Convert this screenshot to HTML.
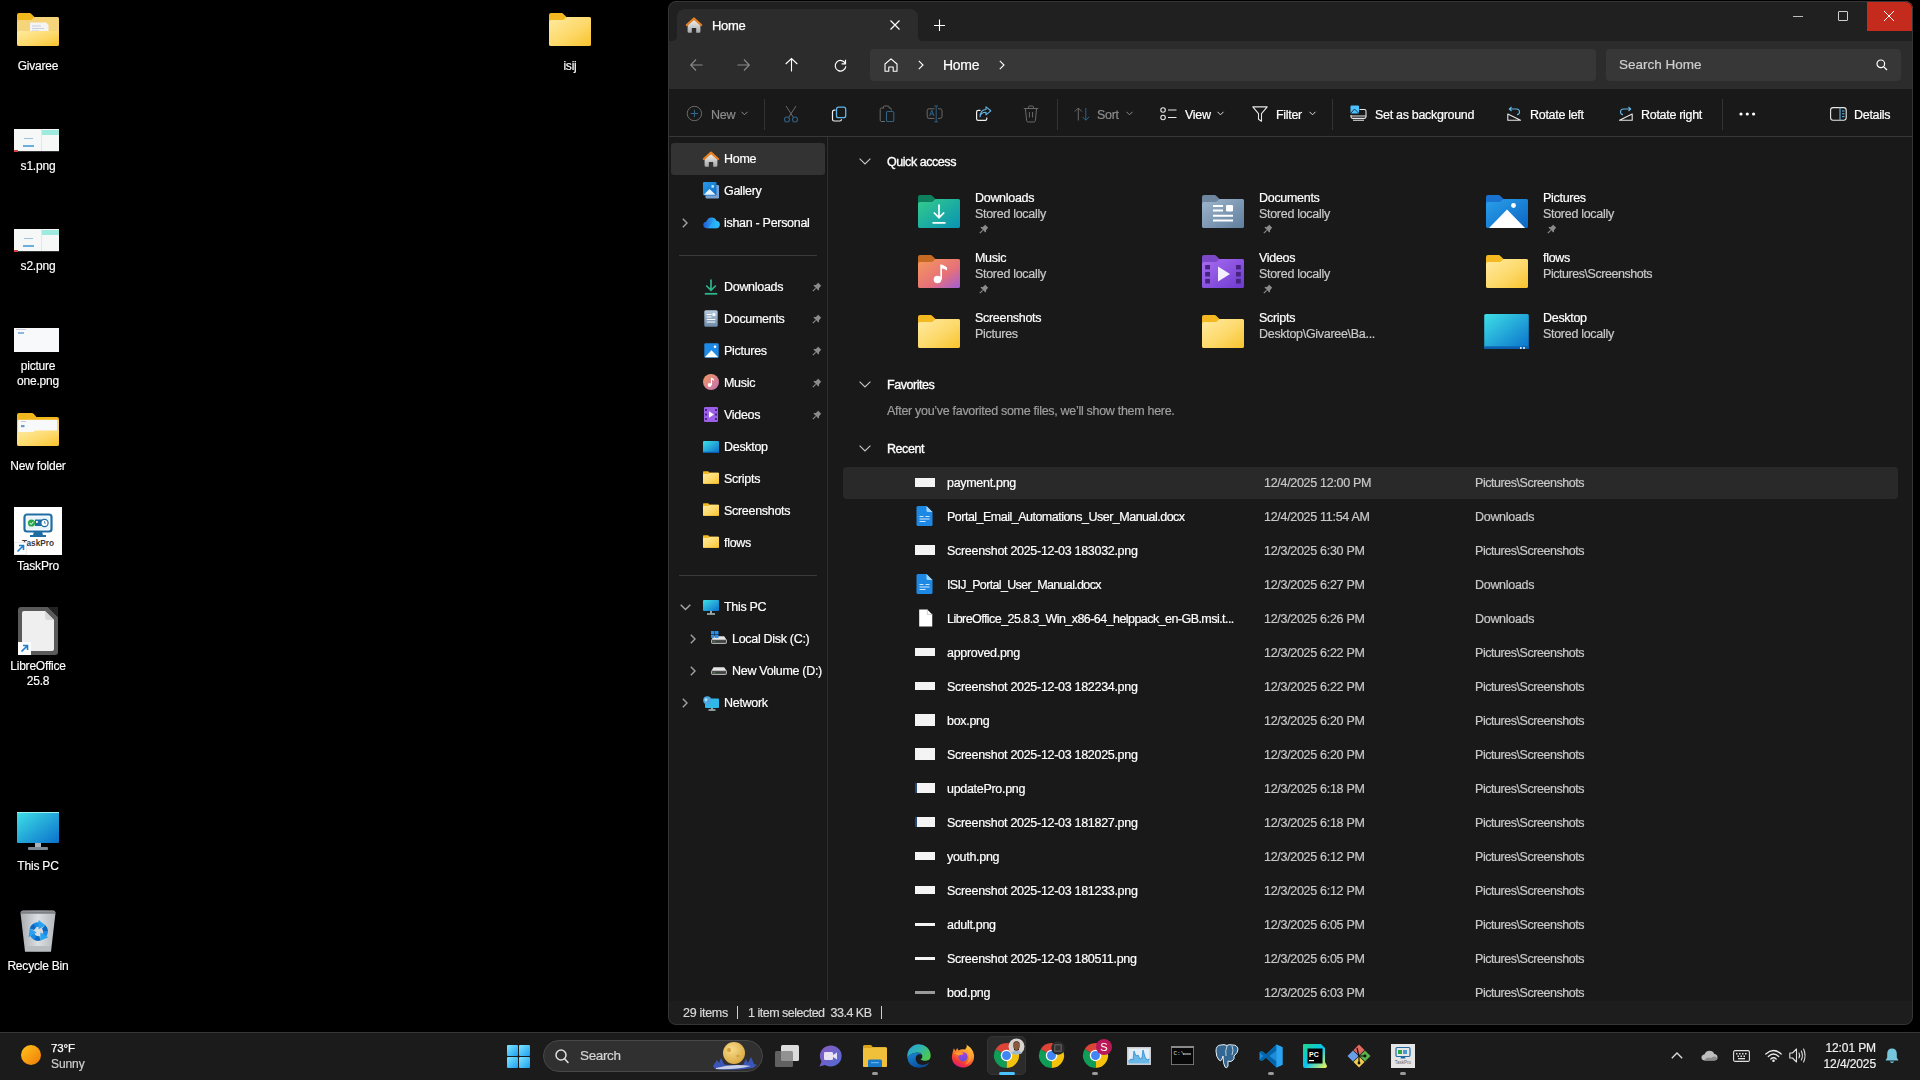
<!DOCTYPE html>
<html><head><meta charset="utf-8">
<style>
*{margin:0;padding:0;box-sizing:border-box}
html,body{width:1920px;height:1080px;overflow:hidden;background:#000;font-family:"Liberation Sans",sans-serif;color:#fff}
.a{position:absolute}
.t{position:absolute;white-space:nowrap;font-size:12.5px;letter-spacing:-0.3px;line-height:16px;color:#fff;will-change:transform;-webkit-text-stroke-width:0.2px}
.g{color:#c8c8c8}
svg{position:absolute;overflow:visible}
#win{position:absolute;left:0;top:0;width:1920px;height:1080px;clip-path:inset(1px 7px 55px 668px round 8px)}
.dl{position:absolute;text-align:center;font-size:12px;letter-spacing:-0.2px;line-height:16px;color:#fff;text-shadow:0 1px 2px #000;will-change:transform;-webkit-text-stroke-width:0.15px}
</style></head><body>
<svg width="0" height="0" style="position:absolute;left:0;top:0">
<defs>
  <linearGradient id="gFold" x1="0" y1="0" x2="1" y2="1"><stop offset="0" stop-color="#ffeaa0"/><stop offset="0.55" stop-color="#fdd96a"/><stop offset="1" stop-color="#f8c32c"/></linearGradient>
  <linearGradient id="gDl" x1="0" y1="0" x2="1" y2="1"><stop offset="0" stop-color="#34cc8c"/><stop offset="1" stop-color="#0892b4"/></linearGradient>
  <linearGradient id="gDoc" x1="0" y1="0" x2="1" y2="1"><stop offset="0" stop-color="#9fb6cc"/><stop offset="1" stop-color="#5f7e9e"/></linearGradient>
  <linearGradient id="gPic" x1="0" y1="0" x2="1" y2="1"><stop offset="0" stop-color="#2aa0ea"/><stop offset="1" stop-color="#0b65c2"/></linearGradient>
  <linearGradient id="gMus" x1="0" y1="0" x2="1" y2="1"><stop offset="0" stop-color="#f59a5a"/><stop offset="0.6" stop-color="#e6707a"/><stop offset="1" stop-color="#9e5fd8"/></linearGradient>
  <linearGradient id="gVid" x1="0" y1="0" x2="1" y2="1"><stop offset="0" stop-color="#a86cf0"/><stop offset="1" stop-color="#6d3ad0"/></linearGradient>
  <linearGradient id="gDesk" x1="0" y1="0" x2="1" y2="1"><stop offset="0" stop-color="#3ee0e6"/><stop offset="1" stop-color="#0a70cc"/></linearGradient>
  <symbol id="fold" viewBox="0 0 42 33"><path d="M0 2 Q0 0 2 0 H12.5 Q13.6 0 14.4 0.9 L17.5 4 H40 Q42 4 42 6 V31 Q42 33 40 33 H2 Q0 33 0 31 Z" fill="#f4b820"/><path d="M0 9 Q0 7 2 7 H13.5 Q14.5 7 15.2 6.2 L16.8 4.6 Q17.4 4 18.4 4 H40 Q42 4 42 6 V31 Q42 33 40 33 H2 Q0 33 0 31 Z" fill="url(#gFold)"/></symbol>
  <symbol id="foldDl" viewBox="0 0 42 33"><path d="M0 2 Q0 0 2 0 H12.5 Q13.6 0 14.4 0.9 L17.5 4 H40 Q42 4 42 6 V31 Q42 33 40 33 H2 Q0 33 0 31 Z" fill="#0e7f5c"/><path d="M0 9 Q0 7 2 7 H13.5 Q14.5 7 15.2 6.2 L16.8 4.6 Q17.4 4 18.4 4 H40 Q42 4 42 6 V31 Q42 33 40 33 H2 Q0 33 0 31 Z" fill="url(#gDl)"/><path d="M21 9.5 V22.5 M15.8 17.5 L21 22.7 L26.2 17.5" fill="none" stroke="#fff" stroke-width="1.7"/><path d="M14.5 27.8 H27.5" stroke="#fff" stroke-width="1.7"/></symbol>
  <symbol id="foldDoc" viewBox="0 0 42 33"><path d="M0 2 Q0 0 2 0 H12.5 Q13.6 0 14.4 0.9 L17.5 4 H40 Q42 4 42 6 V31 Q42 33 40 33 H2 Q0 33 0 31 Z" fill="#6e879e"/><path d="M0 9 Q0 7 2 7 H13.5 Q14.5 7 15.2 6.2 L16.8 4.6 Q17.4 4 18.4 4 H40 Q42 4 42 6 V31 Q42 33 40 33 H2 Q0 33 0 31 Z" fill="url(#gDoc)"/><path d="M11 11 H21 M11 15.5 H21 M11 20.7 H31 M11 25.6 H31" stroke="#fff" stroke-width="2"/><rect x="24" y="10" width="7" height="6.5" rx="1.2" fill="#fff"/></symbol>
  <symbol id="foldPic" viewBox="0 0 42 33"><path d="M0 2 Q0 0 2 0 H12.5 Q13.6 0 14.4 0.9 L17.5 4 H40 Q42 4 42 6 V31 Q42 33 40 33 H2 Q0 33 0 31 Z" fill="#1a72d0"/><path d="M0 9 Q0 7 2 7 H13.5 Q14.5 7 15.2 6.2 L16.8 4.6 Q17.4 4 18.4 4 H40 Q42 4 42 6 V31 Q42 33 40 33 H2 Q0 33 0 31 Z" fill="url(#gPic)"/><path d="M3 33 L21 14.5 L39 33 Z" fill="#fff"/><circle cx="27.5" cy="10.5" r="2.4" fill="#fff"/></symbol>
  <symbol id="foldMus" viewBox="0 0 42 33"><path d="M0 2 Q0 0 2 0 H12.5 Q13.6 0 14.4 0.9 L17.5 4 H40 Q42 4 42 6 V31 Q42 33 40 33 H2 Q0 33 0 31 Z" fill="#c56a22"/><path d="M0 9 Q0 7 2 7 H13.5 Q14.5 7 15.2 6.2 L16.8 4.6 Q17.4 4 18.4 4 H40 Q42 4 42 6 V31 Q42 33 40 33 H2 Q0 33 0 31 Z" fill="url(#gMus)"/><circle cx="19.5" cy="24.5" r="3.8" fill="#fff"/><path d="M22.3 24.5 V9.2 Q25.5 9.8 29 12.5 V15.5 Q26 13.6 24 13.5 V24.5 Z" fill="#fff"/></symbol>
  <symbol id="foldVid" viewBox="0 0 42 33"><path d="M0 2 Q0 0 2 0 H12.5 Q13.6 0 14.4 0.9 L17.5 4 H40 Q42 4 42 6 V31 Q42 33 40 33 H2 Q0 33 0 31 Z" fill="#7b48c8"/><path d="M0 9 Q0 7 2 7 H13.5 Q14.5 7 15.2 6.2 L16.8 4.6 Q17.4 4 18.4 4 H40 Q42 4 42 6 V31 Q42 33 40 33 H2 Q0 33 0 31 Z" fill="url(#gVid)"/><path d="M16 11.5 V26.5 L28 19 Z" fill="#f4f0ff"/><g fill="#45237e"><rect x="3.2" y="10" width="4.8" height="4.4"/><rect x="3.2" y="16.9" width="4.8" height="4.6"/><rect x="3.2" y="23.9" width="4.8" height="4.6"/><rect x="34" y="10" width="4.8" height="4.4"/><rect x="34" y="16.9" width="4.8" height="4.6"/><rect x="34" y="23.9" width="4.8" height="4.6"/></g></symbol>
  <symbol id="deskIc" viewBox="0 0 42 33"><rect x="0" y="0" width="42" height="33" rx="1.5" fill="url(#gDesk)"/><rect x="0" y="30.5" width="42" height="2.5" fill="#0b5fae"/><circle cx="34.5" cy="32" r="0.9" fill="#fff"/><circle cx="37.5" cy="32" r="0.9" fill="#fff"/></symbol>
  <symbol id="pin" viewBox="0 0 10 10"><path d="M6 0.6 L9.4 4 L8.3 4.6 L6.8 6.7 L7.2 7.8 L6.4 8.5 L1.5 3.6 L2.2 2.8 L3.3 3.2 L5.4 1.7 Z" fill="#8c8c8c"/><path d="M3.7 6.3 L0.8 9.2" stroke="#8c8c8c" stroke-width="1.1"/></symbol>
  <symbol id="chevR" viewBox="0 0 6 10"><path d="M0.8 0.8 L5 5 L0.8 9.2" fill="none" stroke="#a0a0a0" stroke-width="1.4"/></symbol>
  <symbol id="chevD" viewBox="0 0 12 7"><path d="M0.6 0.6 L6 6 L11.4 0.6" fill="none" stroke="#c8c8c8" stroke-width="1.1"/></symbol>
  <symbol id="docx" viewBox="0 0 16 20"><path d="M1.5 0 H10 L16 6 V18.5 Q16 20 14.5 20 H1.5 Q0 20 0 18.5 V1.5 Q0 0 1.5 0 Z" fill="#1e88e5"/><path d="M10 0 L16 6 H11.5 Q10 6 10 4.5 Z" fill="#9fd6ff"/><path d="M3 10.5 H7 M9 10.5 H13 M3 13 H13 M3 15.5 H9" stroke="#cfe8ff" stroke-width="1.1"/></symbol>
  <symbol id="file" viewBox="0 0 16 20"><path d="M1 0.5 H10 L15.5 6 V19.5 H1 Z" fill="#fff"/><path d="M10 0.5 V6 H15.5" fill="none" stroke="#bbb" stroke-width="0.8"/></symbol>
</defs>
</svg>

<!-- DESKTOP -->
<svg style="left:17px;top:13px" width="42" height="33" viewBox="0 0 42 33"><path d="M0 2 Q0 0 2 0 H12.5 Q13.6 0 14.4 0.9 L17.5 4 H40 Q42 4 42 6 V31 Q42 33 40 33 H2 Q0 33 0 31 Z" fill="#f2b71d"/><path d="M0 9 Q0 7 2 7 H13.5 Q14.5 7 15.2 6.2 L16.8 4.6 Q17.4 4 18.4 4 H40 Q42 4 42 6 V20 H0 Z" fill="#f6d57a"/><path d="M13 9.5 H29 L31.5 12 V22 H13 Z" fill="#f4f4f4"/><path d="M15 13 H24 M15 15.5 H27 M15 18 H22" stroke="#c8d0dc" stroke-width="1"/><path d="M0 20 Q0 18 2 18 H40 Q42 18 42 20 V31 Q42 33 40 33 H2 Q0 33 0 31 Z" fill="url(#gFold)"/></svg>
<div class="dl" style="left:-2px;top:58px;width:80px;line-height:16px">Givaree</div>
<svg style="left:549px;top:13px" width="42" height="33"><use href="#fold" width="42" height="33"/></svg>
<div class="dl" style="left:530px;top:58px;width:80px;line-height:16px">isij</div>
<div class="a" style="left:14px;top:129px;width:45px;height:23px;background:#f6f8f8;overflow:hidden">
<div class="a" style="left:28px;top:1px;width:17px;height:5px;background:#9eeadc"></div>
<div class="a" style="left:27px;top:0;width:1px;height:23px;background:#e2e6e8"></div>
<div class="a" style="left:10px;top:9px;width:9px;height:1px;background:#9ec0e0"></div>
<div class="a" style="left:9px;top:16px;width:11px;height:2px;background:#6aaee0"></div>
<div class="a" style="left:0;top:22px;width:45px;height:1px;background:#333"></div>
<div class="a" style="left:0;top:21px;width:4px;height:2px;background:#e04040"></div>
</div>
<div class="a" style="left:14px;top:229px;width:45px;height:23px;background:#f6f8f8;overflow:hidden">
<div class="a" style="left:28px;top:1px;width:17px;height:5px;background:#9eeadc"></div>
<div class="a" style="left:27px;top:0;width:1px;height:23px;background:#e2e6e8"></div>
<div class="a" style="left:10px;top:9px;width:9px;height:1px;background:#9ec0e0"></div>
<div class="a" style="left:9px;top:16px;width:11px;height:2px;background:#6aaee0"></div>
<div class="a" style="left:0;top:22px;width:45px;height:1px;background:#333"></div>
<div class="a" style="left:0;top:21px;width:4px;height:2px;background:#e04040"></div>
</div>
<div class="dl" style="left:-2px;top:158px;width:80px;line-height:16px">s1.png</div>
<div class="dl" style="left:-2px;top:258px;width:80px;line-height:16px">s2.png</div>
<div class="a" style="left:14px;top:328px;width:45px;height:24px;background:#f7f9fa"><div class="a" style="left:4px;top:4px;width:6px;height:2px;background:#8ab8e0"></div><div class="a" style="left:2px;top:1px;width:10px;height:1px;background:#ccd"></div></div>
<div class="dl" style="left:-2px;top:358px;width:80px;line-height:16px">picture</div>
<div class="dl" style="left:-2px;top:373px;width:80px;line-height:16px">one.png</div>
<svg style="left:17px;top:413px" width="42" height="33" viewBox="0 0 42 33"><path d="M0 2 Q0 0 2 0 H15 Q16 0 16.8 0.9 L19.5 4 H40 Q42 4 42 6 V31 Q42 33 40 33 H2 Q0 33 0 31 Z" fill="#f2b71d"/><path d="M0 9 Q0 7 2 7 H40 Q42 6.5 42 8 V20 H0 Z" fill="#f6d57a"/><rect x="1.2" y="6.8" width="38.8" height="12.5" fill="#f7f9fa"/><rect x="4" y="12" width="3.5" height="2.2" fill="#6a9ec0"/><rect x="4" y="8" width="5" height="0.8" fill="#bbb"/><path d="M0 21.5 Q0 19.3 2 19.3 H15 Q16 19.3 16.8 18.4 L17.2 18 Q17.6 17.4 18.6 17.4 H40 Q42 17.4 42 19.4 V31 Q42 33 40 33 H2 Q0 33 0 31 Z" fill="url(#gFold)"/></svg>
<div class="dl" style="left:-2px;top:458px;width:80px;line-height:16px">New folder</div>
<div class="a" style="left:14px;top:507px;width:48px;height:48px;background:#fff"></div>
<svg style="left:14px;top:507px" width="48" height="48" viewBox="0 0 48 48"><rect x="10.5" y="7.5" width="27" height="17" rx="2.5" fill="none" stroke="#1f6da3" stroke-width="2.2"/><rect x="12.5" y="9.5" width="23" height="13" fill="#eaf4fb"/><circle cx="17.5" cy="16" r="3.6" fill="#2aa84a"/><path d="M15.8 16 L17.2 17.4 L19.4 14.8" fill="none" stroke="#fff" stroke-width="1"/><rect x="21" y="12.5" width="8" height="6.5" fill="#1f6da3"/><rect x="22" y="14" width="1.8" height="1.8" fill="#fff"/><circle cx="30.5" cy="16" r="3.6" fill="#fff" stroke="#1f6da3" stroke-width="1.2"/><path d="M30.5 14 V16.2 H32" fill="none" stroke="#1f6da3" stroke-width="0.7"/><path d="M20 24.5 H28 L29 28 H19 Z" fill="#1f6da3"/><rect x="16" y="28" width="16" height="2" fill="#1f6da3"/><text x="8" y="38.6" textLength="32" lengthAdjust="spacingAndGlyphs" font-family="Liberation Sans" font-weight="bold" font-size="9.3" fill="#3a3a3a">TaskPro</text><rect x="0.5" y="35.5" width="12" height="12" fill="#fff" stroke="#ddd" stroke-width="0.6"/><path d="M3.5 44.5 L9.5 38.5 M5 38.5 H9.5 V43" fill="none" stroke="#1a7fd0" stroke-width="1.6"/></svg>
<div class="dl" style="left:-2px;top:558px;width:80px;line-height:16px">TaskPro</div>
<svg style="left:18px;top:607px" width="40" height="48" viewBox="0 0 40 48"><path d="M3 0 H30 L40 10 V45 Q40 48 37 48 H3 Q0 48 0 45 V3 Q0 0 3 0 Z" fill="#5a5a5a"/><path d="M6 4 H27 L36 13 V42 Q36 44 34 44 H6 Q4 44 4 42 V6 Q4 4 6 4 Z" fill="#efefef"/><path d="M27 4 L36 13 H30 Q27 13 27 10 Z" fill="#d8d8d8"/><path d="M30 0 H40 V10 Z" fill="#222"/><rect x="0" y="35" width="13" height="13" fill="#fff"/><path d="M3.5 44.5 L9.5 38.5 M5 38.5 H9.5 V43" fill="none" stroke="#1a7fd0" stroke-width="1.6"/></svg>
<div class="dl" style="left:-2px;top:658px;width:80px;line-height:16px">LibreOffice</div>
<div class="dl" style="left:-2px;top:673px;width:80px;line-height:16px">25.8</div>
<svg style="left:17px;top:812px" width="42" height="39" viewBox="0 0 42 39"><rect x="0" y="0" width="42" height="31" rx="1" fill="url(#gDesk)"/><rect x="0" y="0" width="42" height="1" fill="#9ee"/><rect x="18" y="31" width="6" height="5" fill="#a9b4bc"/><rect x="11" y="35" width="20" height="3" rx="1" fill="#7d8a94"/></svg>
<div class="dl" style="left:-2px;top:858px;width:80px;line-height:16px">This PC</div>
<svg style="left:20px;top:910px" width="36" height="42" viewBox="0 0 36 42"><defs><linearGradient id="gBin" x1="0" y1="0" x2="1" y2="0"><stop offset="0" stop-color="#a8acb0"/><stop offset="0.5" stop-color="#dcdfe2"/><stop offset="1" stop-color="#b4b8bc"/></linearGradient></defs><path d="M0.5 3 Q0.5 0.5 3 0.5 H33 Q35.5 0.5 35.5 3 L31 41.5 H5 Z" fill="url(#gBin)"/><path d="M1 2.5 H35" stroke="#7d8185" stroke-width="2.5"/><rect x="5" y="36" width="26" height="5.5" fill="#b8bcbf"/><g transform="translate(18.5 21.5)"><g id="rarm"><path d="M-6.06 -3.5 A7 7 0 0 1 1.2 -6.9" stroke="#1a8ae6" stroke-width="4.6" fill="none"/><path d="M0 -11.5 L7.2 -6 L0 -2.2 Z" fill="#29a3f0"/><path d="M-6.6 -2.2 A7 7 0 0 1 -3.8 -5.8" stroke="#0c68c0" stroke-width="4.6" fill="none"/></g><use href="#rarm" transform="rotate(120)"/><use href="#rarm" transform="rotate(240)"/></g></svg>
<div class="dl" style="left:-2px;top:958px;width:80px;line-height:16px">Recycle Bin</div>

<!-- WINDOW -->
<div id="win">
  <div class="a" style="left:668px;top:0;width:1245px;height:41px;background:#202020"></div>
  <div class="a" style="left:668px;top:41px;width:1245px;height:48px;background:#2c2c2c"></div>
  <div class="a" style="left:668px;top:89px;width:1245px;height:912px;background:#191919"></div>
  <div class="a" style="left:668px;top:136px;width:1245px;height:1px;background:#383838"></div>
  <div class="a" style="left:826px;top:137px;width:1px;height:864px;background:#151515"></div><div class="a" style="left:827px;top:137px;width:1px;height:864px;background:#303030"></div>
  <div class="a" style="left:668px;top:1001px;width:1245px;height:24px;background:#1d1d1d"></div>
  <!-- TAB -->
  <div class="a" style="left:677px;top:9px;width:241px;height:32px;background:#2c2c2c;border-radius:8px 8px 0 0"></div>
  <div class="a" style="left:673px;top:37px;width:4px;height:4px;background:radial-gradient(circle at 0 0,#202020 3.5px,#2c2c2c 4px)"></div>
  <div class="a" style="left:918px;top:37px;width:4px;height:4px;background:radial-gradient(circle at 100% 0,#202020 3.5px,#2c2c2c 4px)"></div>
  <svg style="left:686px;top:17px" width="16" height="16" viewBox="0 0 16 16">
    <defs><linearGradient id="hg" x1="0" y1="0" x2="0" y2="1"><stop offset="0" stop-color="#f0f0f0"/><stop offset="1" stop-color="#a8a8a8"/></linearGradient></defs>
    <path d="M1.6 8 L8 2.8 L14.4 8 V14.6 Q14.4 15.8 13.2 15.8 H10.2 V11 H5.8 V15.8 H2.8 Q1.6 15.8 1.6 14.6 Z" fill="url(#hg)"/>
    <path d="M0.8 8 L8 1.5 L15.2 8" fill="none" stroke="#e8801e" stroke-width="2.2" stroke-linejoin="round" stroke-linecap="round"/>
  </svg>
  <div class="t" style="left:712px;top:18px;font-size:13px;letter-spacing:-0.3px;-webkit-text-stroke:0.25px #fff">Home</div>
  <svg style="left:890px;top:20px" width="10" height="10" viewBox="0 0 10 10"><path d="M0.5 0.5 L9.5 9.5 M9.5 0.5 L0.5 9.5" stroke="#fff" stroke-width="1.2"/></svg>
  <svg style="left:933px;top:19px" width="13" height="13" viewBox="0 0 13 13"><path d="M6.5 0.5 V12 M1 6.5 H12" stroke="#fff" stroke-width="1.1"/></svg>
  <!-- window controls -->
  <div class="a" style="left:1867px;top:1px;width:46px;height:30px;background:#c42b1c"></div>
  <svg style="left:1884px;top:11px" width="10" height="10" viewBox="0 0 10 10"><path d="M0 0 L10 10 M10 0 L0 10" stroke="#fff" stroke-width="1"/></svg>
  <div class="a" style="left:1838px;top:11px;width:10px;height:10px;border:1px solid #d0d0d0;border-radius:1px"></div>
  <div class="a" style="left:1793px;top:16px;width:10px;height:1px;background:#bdbdbd"></div>

  <!-- ADDRESS ROW -->
  <svg style="left:690px;top:59px" width="13" height="12" viewBox="0 0 13 12"><path d="M6 0.5 L0.7 6 L6 11.5 M0.7 6 H12.5" fill="none" stroke="#8a8a8a" stroke-width="1.1"/></svg>
  <svg style="left:737px;top:59px" width="13" height="12" viewBox="0 0 13 12"><path d="M7 0.5 L12.3 6 L7 11.5 M12.3 6 H0.5" fill="none" stroke="#8a8a8a" stroke-width="1.1"/></svg>
  <svg style="left:785px;top:58px" width="13" height="14" viewBox="0 0 13 14"><path d="M0.7 6 L6.5 0.6 L12.3 6 M6.5 0.6 V13.5" fill="none" stroke="#fff" stroke-width="1.1"/></svg>
  <svg style="left:834px;top:59px" width="13" height="13" viewBox="0 0 13 13"><path d="M11.3 4.5 A5.3 5.3 0 1 0 11.8 7.2" fill="none" stroke="#fff" stroke-width="1.2"/><path d="M11.5 0.8 V4.8 H7.6" fill="none" stroke="#fff" stroke-width="1.2"/></svg>
  <div class="a" style="left:870px;top:49px;width:726px;height:32px;background:#373737;border-radius:4px"></div>
  <svg style="left:883px;top:57px" width="16" height="16" viewBox="0 0 16 16"><path d="M2 7 L8 1.8 L14 7 V14.2 H10.2 V10 H5.8 V14.2 H2 Z" fill="none" stroke="#fff" stroke-width="1.1" stroke-linejoin="round"/></svg>
  <svg style="left:918px;top:60px" width="6" height="10" viewBox="0 0 6 10"><path d="M0.8 0.8 L5 5 L0.8 9.2" fill="none" stroke="#fff" stroke-width="1.1"/></svg>
  <div class="t" style="left:943px;top:57px;font-size:14px;letter-spacing:-0.3px">Home</div>
  <svg style="left:999px;top:60px" width="6" height="10" viewBox="0 0 6 10"><path d="M0.8 0.8 L5 5 L0.8 9.2" fill="none" stroke="#fff" stroke-width="1.1"/></svg>
  <div class="a" style="left:1606px;top:49px;width:295px;height:32px;background:#373737;border-radius:4px"></div>
  <div class="t" style="left:1619px;top:57px;font-size:13.5px;letter-spacing:0px;color:#cfcfcf">Search Home</div>
  <svg style="left:1876px;top:59px" width="12" height="12" viewBox="0 0 12 12"><circle cx="4.8" cy="4.8" r="3.8" fill="none" stroke="#fff" stroke-width="1.2"/><path d="M7.6 7.6 L11 11" stroke="#fff" stroke-width="1.3"/></svg>

  <!-- TOOLBAR -->
  <svg style="left:686px;top:106px" width="16" height="16" viewBox="0 0 16 16"><circle cx="8.4" cy="7.5" r="7.2" fill="none" stroke="#6a6a6a" stroke-width="1"/><path d="M8.4 3.8 V11.2 M4.7 7.5 H12.1" stroke="#2f6a90" stroke-width="1"/></svg>
  <div class="t" style="left:711px;top:107px;color:#8c8c8c">New</div>
  <svg style="left:741px;top:111px" width="7" height="5" viewBox="0 0 7 5"><path d="M0.5 0.8 L3.5 3.8 L6.5 0.8" fill="none" stroke="#8c8c8c" stroke-width="1"/></svg>
  <div class="a" style="left:764px;top:99px;width:1px;height:31px;background:#333"></div>
  <svg style="left:783px;top:105px" width="16" height="18" viewBox="0 0 16 18"><path d="M3 1 L10.5 12.5 M13 1 L5.5 12.5" stroke="#6a6a6a" stroke-width="1"/><circle cx="4" cy="14.5" r="2.5" fill="none" stroke="#2f6285" stroke-width="1.1"/><circle cx="12" cy="14.5" r="2.5" fill="none" stroke="#2f6285" stroke-width="1.1"/></svg>
  <svg style="left:831px;top:106px" width="17" height="17" viewBox="0 0 17 17"><path d="M4.5 4.2 H3.2 Q1.5 4.2 1.5 6 V13.2 Q1.5 15 3.2 15 H8.8 Q10.5 15 10.5 13.2" fill="none" stroke="#f0f0f0" stroke-width="1.2"/><rect x="5.5" y="1.2" width="9.2" height="10.5" rx="2" fill="none" stroke="#62b6e6" stroke-width="1.3"/></svg>
  <svg style="left:879px;top:105px" width="16" height="18" viewBox="0 0 16 18"><path d="M5 3 H2.5 Q1.2 3 1.2 4.3 V15.2 Q1.2 16.5 2.5 16.5 H6" fill="none" stroke="#6a6a6a" stroke-width="1"/><path d="M4.5 3 V1.8 Q4.5 1 5.3 1 H9.2 Q10 1 10 1.8 V3 H11 Q12.3 3 12.3 4.3 V5.5" fill="none" stroke="#6a6a6a" stroke-width="1"/><rect x="7.5" y="6.5" width="7.3" height="10" rx="1.3" fill="none" stroke="#2f6285" stroke-width="1.1"/></svg>
  <svg style="left:926px;top:105px" width="18" height="18" viewBox="0 0 18 18"><path d="M8.5 3.8 H3 Q1.2 3.8 1.2 5.6 V11.6 Q1.2 13.4 3 13.4 H8.5 M12 3.8 H14.2 Q16 3.8 16 5.6 V11.6 Q16 13.4 14.2 13.4 H12" fill="none" stroke="#6a6a6a" stroke-width="1"/><path d="M10.2 1 V16.8 M8.4 1 H12 M8.4 16.8 H12" stroke="#2f6285" stroke-width="1"/><path d="M3.5 11 L5.8 5.2 L8 11 M4.3 9 H7.3" fill="none" stroke="#2f6285" stroke-width="1"/></svg>
  <svg style="left:975px;top:106px" width="17" height="16" viewBox="0 0 17 16"><path d="M5.5 4.3 H3.2 Q1.6 4.3 1.6 5.9 V12.8 Q1.6 14.4 3.2 14.4 H10.2 Q11.8 14.4 11.8 12.8 V11.5" fill="none" stroke="#f0f0f0" stroke-width="1.2"/><path d="M5 10.8 Q5.8 6.2 11 6.2 V8.8 L15.8 4.8 L11 0.9 V3.5 Q5.4 3.8 5 10.8 Z" fill="none" stroke="#62b6e6" stroke-width="1.1" stroke-linejoin="round"/></svg>
  <svg style="left:1023px;top:105px" width="16" height="18" viewBox="0 0 16 18"><path d="M0.8 3.5 H15.2 M5.5 3.5 V2.2 Q5.5 1 6.7 1 H9.3 Q10.5 1 10.5 2.2 V3.5 M2.4 3.5 L3.6 15.5 Q3.8 17 5.3 17 H10.7 Q12.2 17 12.4 15.5 L13.6 3.5 M6.4 7 V12.5 M9.6 7 V12.5" fill="none" stroke="#6a6a6a" stroke-width="1"/></svg>
  <div class="a" style="left:1057px;top:99px;width:1px;height:31px;background:#333"></div>
  <svg style="left:1074px;top:107px" width="17" height="14" viewBox="0 0 17 14"><path d="M4.3 13.5 V1 M0.8 4.5 L4.3 1 L7.8 4.5" fill="none" stroke="#6a6a6a" stroke-width="1"/><path d="M11.8 1 V13.2 M8.3 9.7 L11.8 13.2 L15.3 9.7" fill="none" stroke="#2f6285" stroke-width="1"/></svg>
  <div class="t" style="left:1097px;top:107px;color:#8c8c8c">Sort</div>
  <svg style="left:1126px;top:111px" width="7" height="5" viewBox="0 0 7 5"><path d="M0.5 0.8 L3.5 3.8 L6.5 0.8" fill="none" stroke="#8c8c8c" stroke-width="1"/></svg>
  <svg style="left:1160px;top:107px" width="17" height="14" viewBox="0 0 17 14"><rect x="0.8" y="0.8" width="4.5" height="4.5" rx="2.2" fill="none" stroke="#e8e8e8" stroke-width="1.1"/><rect x="0.8" y="8.2" width="4.5" height="4.5" rx="2.2" fill="none" stroke="#e8e8e8" stroke-width="1.1"/><path d="M8 3 H16.5 M8 10.5 H16.5" stroke="#e8e8e8" stroke-width="1.1"/></svg>
  <div class="t" style="left:1185px;top:107px">View</div>
  <svg style="left:1217px;top:111px" width="7" height="5" viewBox="0 0 7 5"><path d="M0.5 0.8 L3.5 3.8 L6.5 0.8" fill="none" stroke="#ddd" stroke-width="1"/></svg>
  <svg style="left:1252px;top:106px" width="16" height="16" viewBox="0 0 16 16"><path d="M0.8 0.9 H15.2 L9.5 7.6 V15.2 L6.5 13.2 V7.6 Z" fill="none" stroke="#e8e8e8" stroke-width="1.1" stroke-linejoin="round"/></svg>
  <div class="t" style="left:1276px;top:107px">Filter</div>
  <svg style="left:1309px;top:111px" width="7" height="5" viewBox="0 0 7 5"><path d="M0.5 0.8 L3.5 3.8 L6.5 0.8" fill="none" stroke="#ddd" stroke-width="1"/></svg>
  <div class="a" style="left:1332px;top:99px;width:1px;height:31px;background:#333"></div>
  <svg style="left:1350px;top:105px" width="17" height="16" viewBox="0 0 17 16"><path d="M9.5 4.5 H14.4 Q16 4.5 16 6.1 V11.8 Q16 13.4 14.4 13.4 H2.6 Q1 13.4 1 11.8 V10 M1 11 H16 M3 15.2 H14" fill="none" stroke="#e8e8e8" stroke-width="1.1"/><rect x="0.5" y="0.5" width="8.5" height="8" rx="1" fill="#4cc2ff"/><path d="M1 8 L4.5 4 L8.5 8" fill="none" stroke="#1a3a50" stroke-width="1"/></svg>
  <div class="t" style="left:1375px;top:107px">Set as background</div>
  <svg style="left:1507px;top:106px" width="15" height="15" viewBox="0 0 15 15"><path d="M0.8 14.2 H13.5 L0.8 8 Z" fill="none" stroke="#e8e8e8" stroke-width="1.1" stroke-linejoin="round"/><path d="M4.5 1 L2.3 3 L4.5 5 M2.3 3 H9.5 Q12.5 3 12.5 6 Q12.5 8.5 10 8.6" fill="none" stroke="#62b6e6" stroke-width="1.1"/></svg>
  <div class="t" style="left:1530px;top:107px">Rotate left</div>
  <svg style="left:1618px;top:106px" width="15" height="15" viewBox="0 0 15 15"><path d="M14.2 14.2 H1.5 L14.2 8 Z" fill="none" stroke="#e8e8e8" stroke-width="1.1" stroke-linejoin="round"/><path d="M10.5 1 L12.7 3 L10.5 5 M12.7 3 H5.5 Q2.5 3 2.5 6 Q2.5 8.5 5 8.6" fill="none" stroke="#62b6e6" stroke-width="1.1"/></svg>
  <div class="t" style="left:1641px;top:107px">Rotate right</div>
  <div class="a" style="left:1722px;top:99px;width:1px;height:31px;background:#333"></div>
  <svg style="left:1739px;top:112px" width="17" height="4" viewBox="0 0 17 4"><circle cx="2" cy="2" r="1.6" fill="#fff"/><circle cx="8.3" cy="2" r="1.6" fill="#fff"/><circle cx="14.6" cy="2" r="1.6" fill="#fff"/></svg>
  <svg style="left:1830px;top:107px" width="17" height="14" viewBox="0 0 17 14"><rect x="0.6" y="0.6" width="15.6" height="12.6" rx="2.5" fill="none" stroke="#e8e8e8" stroke-width="1.1"/><path d="M10 0.6 V13.2" stroke="#62b6e6" stroke-width="1.1"/><path d="M12 4 H14.5 M12 6.8 H14.5 M12 9.6 H14.5" stroke="#62b6e6" stroke-width="1"/></svg>
  <div class="t" style="left:1854px;top:107px">Details</div>
<!-- NAV -->
<div class="a" style="left:671px;top:143px;width:154px;height:32px;background:#333333;border-radius:3px"></div>
<svg style="left:703px;top:151px" width="16" height="16" viewBox="0 0 16 16"><path d="M1.6 8 L8 2.8 L14.4 8 V14.6 Q14.4 15.8 13.2 15.8 H10.2 V11 H5.8 V15.8 H2.8 Q1.6 15.8 1.6 14.6 Z" fill="url(#hg)"/><path d="M0.9 8 L8 1.6 L15.1 8" fill="none" stroke="#e8801e" stroke-width="2.2" stroke-linejoin="round" stroke-linecap="round"/></svg>
<div class="t " style="left:724px;top:151px;">Home</div>
<svg style="left:703px;top:182px" width="16" height="17" viewBox="0 0 16 17"><defs><linearGradient id="gGal" x1="0" y1="0" x2="1" y2="1"><stop offset="0" stop-color="#2a9ae8"/><stop offset="1" stop-color="#0e6cc4"/></linearGradient></defs><rect x="2.5" y="3" width="13.5" height="13.5" rx="1.2" fill="#7aa2d0"/><rect x="0" y="0" width="13.5" height="13.5" rx="1.2" fill="url(#gGal)"/><path d="M0.8 12.8 L6.5 7 L12.6 12.8 Z" fill="#e4f2ff"/><rect x="8.5" y="3.2" width="2.4" height="2.4" fill="#c8ecff"/></svg>
<div class="t " style="left:724px;top:183px;">Gallery</div>
<svg style="left:682px;top:218px" width="6" height="10"><use href="#chevR" width="6" height="10"/></svg>
<svg style="left:703px;top:217px" width="17" height="12" viewBox="0 0 17 12"><defs><linearGradient id="gOd" x1="0" y1="0" x2="1" y2="0"><stop offset="0" stop-color="#2060d8"/><stop offset="1" stop-color="#30c8fa"/></linearGradient></defs><path d="M4 11.2 Q0.3 11.2 0.3 7.8 Q0.3 5.2 3.2 4.8 Q4.6 0.5 8.8 0.5 Q12.2 0.5 13.4 3.8 Q16.7 4.2 16.7 7.6 Q16.7 11.2 13.2 11.2 Z" fill="url(#gOd)"/><path d="M4.5 11.2 L11.5 3 Q13 3.5 13.4 3.8 Q16.7 4.2 16.7 7.6 Q16.7 11.2 13.2 11.2 Z" fill="#2ab8f8" fill-opacity="0.6"/></svg>
<div class="t " style="left:724px;top:215px;">ishan - Personal</div>
<div class="a" style="left:679px;top:255px;width:138px;height:1px;background:#3a3a3a"></div>
<svg style="left:704px;top:279px" width="14" height="16" viewBox="0 0 14 16"><path d="M7 0.5 V11 M2.2 6.5 L7 11.3 L11.8 6.5" fill="none" stroke="#2bb58a" stroke-width="1.7"/><path d="M0.8 14.8 H13.2" stroke="#2bb58a" stroke-width="1.8"/></svg>
<div class="t " style="left:724px;top:279px;">Downloads</div>
<svg style="left:704px;top:310px" width="14" height="17" viewBox="0 0 14 17"><defs><linearGradient id="gDocN" x1="0" y1="0" x2="0" y2="1"><stop offset="0" stop-color="#b8cce0"/><stop offset="1" stop-color="#6d8aa8"/></linearGradient></defs><rect x="0.3" y="0.3" width="13.4" height="16.4" rx="1.5" fill="url(#gDocN)"/><path d="M2.8 4.5 H7.5 M2.8 7 H7.5 M2.8 9.5 H11.2 M2.8 12 H11.2" stroke="#fff" stroke-width="1.1"/><rect x="8.5" y="3.2" width="2.8" height="2.8" fill="#fff"/></svg>
<div class="t " style="left:724px;top:311px;">Documents</div>
<svg style="left:704px;top:343px" width="15" height="15" viewBox="0 0 15 15"><rect x="0.3" y="0.3" width="14.4" height="14.4" rx="1.2" fill="#1f8ae6"/><path d="M0.8 14.2 L7.5 7.2 L14.2 14.2 Z" fill="#fff"/><circle cx="11" cy="3.8" r="1.3" fill="#fff"/></svg>
<div class="t " style="left:724px;top:343px;">Pictures</div>
<svg style="left:703px;top:374px" width="16" height="16" viewBox="0 0 16 16"><defs><linearGradient id="gMusN" x1="0" y1="0" x2="1" y2="1"><stop offset="0" stop-color="#f49a5e"/><stop offset="1" stop-color="#c26fb8"/></linearGradient></defs><circle cx="8" cy="8" r="8" fill="url(#gMusN)"/><circle cx="6.6" cy="11" r="1.9" fill="#fff"/><path d="M7.9 11 V3.5 Q9.8 4 11 5.3 V6.8 Q9.6 5.9 9 5.8 V11 Z" fill="#fff"/></svg>
<div class="t " style="left:724px;top:375px;">Music</div>
<svg style="left:704px;top:407px" width="14" height="15" viewBox="0 0 14 15"><rect x="0" y="0" width="14" height="15" rx="1.2" fill="#9b5fe8"/><path d="M5 4.3 V10.7 L10 7.5 Z" fill="#fff"/><g fill="#4a2590"><rect x="1" y="2" width="2" height="2"/><rect x="1" y="6.5" width="2" height="2"/><rect x="1" y="11" width="2" height="2"/><rect x="11" y="2" width="2" height="2"/><rect x="11" y="6.5" width="2" height="2"/><rect x="11" y="11" width="2" height="2"/></g></svg>
<div class="t " style="left:724px;top:407px;">Videos</div>
<svg style="left:812px;top:282px" width="10" height="10"><use href="#pin" width="10" height="10"/></svg>
<svg style="left:812px;top:314px" width="10" height="10"><use href="#pin" width="10" height="10"/></svg>
<svg style="left:812px;top:346px" width="10" height="10"><use href="#pin" width="10" height="10"/></svg>
<svg style="left:812px;top:378px" width="10" height="10"><use href="#pin" width="10" height="10"/></svg>
<svg style="left:812px;top:410px" width="10" height="10"><use href="#pin" width="10" height="10"/></svg>
<svg style="left:703px;top:441px" width="16" height="12" viewBox="0 0 16 12"><rect x="0" y="0" width="16" height="12" rx="1.2" fill="url(#gDesk)"/><rect x="0" y="10.8" width="16" height="1.2" fill="#0b5fae"/></svg>
<div class="t " style="left:724px;top:439px;">Desktop</div>
<svg style="left:703px;top:471px" width="16" height="13"><use href="#fold" width="16" height="13"/></svg>
<div class="t " style="left:724px;top:471px;">Scripts</div>
<svg style="left:703px;top:503px" width="16" height="13"><use href="#fold" width="16" height="13"/></svg>
<div class="t " style="left:724px;top:503px;">Screenshots</div>
<svg style="left:703px;top:535px" width="16" height="13"><use href="#fold" width="16" height="13"/></svg>
<div class="t " style="left:724px;top:535px;">flows</div>
<div class="a" style="left:679px;top:575px;width:138px;height:1px;background:#3a3a3a"></div>
<svg style="left:680px;top:604px" width="11" height="7" viewBox="0 0 11 7"><path d="M0.7 0.7 L5.5 5.5 L10.3 0.7" fill="none" stroke="#a8a8a8" stroke-width="1.4"/></svg>
<svg style="left:703px;top:600px" width="16" height="15" viewBox="0 0 16 15"><rect x="0" y="0" width="16" height="11" rx="1" fill="url(#gDesk)"/><rect x="7" y="11" width="2" height="2.5" fill="#9aa"/><rect x="4" y="13.3" width="8" height="1.4" fill="#bcc"/></svg>
<div class="t " style="left:724px;top:599px;">This PC</div>
<svg style="left:690px;top:634px" width="6" height="10"><use href="#chevR" width="6" height="10"/></svg>
<svg style="left:711px;top:631px" width="16" height="13" viewBox="0 0 16 13"><path d="M2.5 5.3 H13.2 L15.5 8.8 H0.5 Z" fill="#e4e4e4"/><rect x="0.6" y="8.6" width="14.8" height="3.8" rx="0.6" fill="#404040" stroke="#d0d0d0" stroke-width="0.9"/><circle cx="3.2" cy="10.5" r="0.6" fill="#4c4"/><g fill="#2a8ee8"><rect x="0" y="0" width="3.5" height="3.2"/><rect x="4" y="0" width="3.5" height="3.2"/><rect x="0" y="3.7" width="3.5" height="3.2"/><rect x="4" y="3.7" width="3.5" height="3.2"/></g></svg>
<div class="t " style="left:732px;top:631px;">Local Disk (C:)</div>
<svg style="left:690px;top:666px" width="6" height="10"><use href="#chevR" width="6" height="10"/></svg>
<svg style="left:711px;top:667px" width="16" height="9" viewBox="0 0 16 9"><path d="M2.5 0.3 H13.2 L15.5 3.8 H0.5 Z" fill="#e4e4e4"/><rect x="0.6" y="3.6" width="14.8" height="3.8" rx="0.6" fill="#404040" stroke="#d0d0d0" stroke-width="0.9"/><circle cx="3.2" cy="5.5" r="0.6" fill="#4c4"/></svg>
<div class="t " style="left:732px;top:663px;">New Volume (D:)</div>
<svg style="left:682px;top:698px" width="6" height="10"><use href="#chevR" width="6" height="10"/></svg>
<svg style="left:703px;top:696px" width="16" height="15" viewBox="0 0 16 15"><rect x="2" y="2.5" width="14" height="9.5" rx="1" fill="#2fb8e8"/><rect x="8" y="12" width="2" height="1.5" fill="#9aa"/><rect x="5.5" y="13.3" width="7" height="1.4" fill="#bcc"/><circle cx="4.2" cy="4.2" r="4" fill="#4aa6e0"/><path d="M1.2 3.5 Q2.5 1.5 4.5 2.5 Q5 4.5 3 5.5 Q2.5 7 4 7.8" fill="#c8ecff" fill-opacity="0.8"/></svg>
<div class="t " style="left:724px;top:695px;">Network</div>
<!-- CONTENT -->
<svg style="left:859px;top:158px" width="12" height="7"><use href="#chevD" width="12" height="7"/></svg>
<div class="t " style="left:887px;top:153.5px;font-weight:normal;-webkit-text-stroke:0.35px #fff;letter-spacing:-0.45px">Quick access</div>
<svg style="left:859px;top:381px" width="12" height="7"><use href="#chevD" width="12" height="7"/></svg>
<div class="t " style="left:887px;top:377px;font-weight:normal;-webkit-text-stroke:0.35px #fff;letter-spacing:-0.45px">Favorites</div>
<svg style="left:859px;top:445px" width="12" height="7"><use href="#chevD" width="12" height="7"/></svg>
<div class="t " style="left:887px;top:441px;font-weight:normal;-webkit-text-stroke:0.35px #fff;letter-spacing:-0.45px">Recent</div>
<svg style="left:918px;top:195px" width="42" height="33"><use href="#foldDl" width="42" height="33"/></svg>
<div class="t " style="left:975px;top:190px;">Downloads</div>
<div class="t g" style="left:975px;top:205.5px;">Stored locally</div>
<svg style="left:979px;top:224px" width="10" height="10"><use href="#pin" width="10" height="10"/></svg>
<svg style="left:1202px;top:195px" width="42" height="33"><use href="#foldDoc" width="42" height="33"/></svg>
<div class="t " style="left:1259px;top:190px;">Documents</div>
<div class="t g" style="left:1259px;top:205.5px;">Stored locally</div>
<svg style="left:1263px;top:224px" width="10" height="10"><use href="#pin" width="10" height="10"/></svg>
<svg style="left:1486px;top:195px" width="42" height="33"><use href="#foldPic" width="42" height="33"/></svg>
<div class="t " style="left:1543px;top:190px;">Pictures</div>
<div class="t g" style="left:1543px;top:205.5px;">Stored locally</div>
<svg style="left:1547px;top:224px" width="10" height="10"><use href="#pin" width="10" height="10"/></svg>
<svg style="left:918px;top:255px" width="42" height="33"><use href="#foldMus" width="42" height="33"/></svg>
<div class="t " style="left:975px;top:250px;">Music</div>
<div class="t g" style="left:975px;top:265.5px;">Stored locally</div>
<svg style="left:979px;top:284px" width="10" height="10"><use href="#pin" width="10" height="10"/></svg>
<svg style="left:1202px;top:255px" width="42" height="33"><use href="#foldVid" width="42" height="33"/></svg>
<div class="t " style="left:1259px;top:250px;">Videos</div>
<div class="t g" style="left:1259px;top:265.5px;">Stored locally</div>
<svg style="left:1263px;top:284px" width="10" height="10"><use href="#pin" width="10" height="10"/></svg>
<svg style="left:1486px;top:255px" width="42" height="33"><use href="#fold" width="42" height="33"/></svg>
<div class="t " style="left:1543px;top:250px;">flows</div>
<div class="t g" style="left:1543px;top:265.5px;letter-spacing:-0.45px">Pictures\Screenshots</div>
<svg style="left:918px;top:315px" width="42" height="33"><use href="#fold" width="42" height="33"/></svg>
<div class="t " style="left:975px;top:310px;">Screenshots</div>
<div class="t g" style="left:975px;top:325.5px;">Pictures</div>
<svg style="left:1202px;top:315px" width="42" height="33"><use href="#fold" width="42" height="33"/></svg>
<div class="t " style="left:1259px;top:310px;">Scripts</div>
<div class="t g" style="left:1259px;top:325.5px;">Desktop\Givaree\Ba...</div>
<svg style="left:1484px;top:314px" width="45" height="35"><use href="#deskIc" width="45" height="35"/></svg>
<div class="t " style="left:1543px;top:310px;">Desktop</div>
<div class="t g" style="left:1543px;top:325.5px;">Stored locally</div>
<div class="t " style="left:887px;top:403px;color:#9e9e9e">After you’ve favorited some files, we’ll show them here.</div>
<div class="a" style="left:843px;top:467px;width:1055px;height:32px;background:#292929;border-radius:4px"></div>
<div class="a" style="left:915px;top:477.5px;width:20px;height:9px;background:#f4f4f4"></div>
<div class="t " style="left:947px;top:474.5px;">payment.png</div>
<div class="t g" style="left:1264px;top:474.5px;">12/4/2025 12:00 PM</div>
<div class="t g" style="left:1475px;top:474.5px;letter-spacing:-0.45px">Pictures\Screenshots</div>
<svg style="left:916px;top:506px" width="17" height="20"><use href="#docx" width="17" height="20"/></svg>
<div class="t " style="left:947px;top:508.5px;letter-spacing:-0.51px">Portal_Email_Automations_User_Manual.docx</div>
<div class="t g" style="left:1264px;top:508.5px;">12/4/2025 11:54 AM</div>
<div class="t g" style="left:1475px;top:508.5px;">Downloads</div>
<div class="a" style="left:915px;top:545.0px;width:20px;height:10px;background:#f4f4f4"></div>
<div class="t " style="left:947px;top:542.5px;">Screenshot 2025-12-03 183032.png</div>
<div class="t g" style="left:1264px;top:542.5px;">12/3/2025 6:30 PM</div>
<div class="t g" style="left:1475px;top:542.5px;letter-spacing:-0.45px">Pictures\Screenshots</div>
<svg style="left:916px;top:574px" width="17" height="20"><use href="#docx" width="17" height="20"/></svg>
<div class="t " style="left:947px;top:576.5px;letter-spacing:-0.66px">ISIJ_Portal_User_Manual.docx</div>
<div class="t g" style="left:1264px;top:576.5px;">12/3/2025 6:27 PM</div>
<div class="t g" style="left:1475px;top:576.5px;">Downloads</div>
<svg style="left:918px;top:609px" width="15" height="18"><use href="#file" width="15" height="18"/></svg>
<div class="t " style="left:947px;top:610.5px;letter-spacing:-0.55px">LibreOffice_25.8.3_Win_x86-64_helppack_en-GB.msi.t...</div>
<div class="t g" style="left:1264px;top:610.5px;">12/3/2025 6:26 PM</div>
<div class="t g" style="left:1475px;top:610.5px;">Downloads</div>
<div class="a" style="left:915px;top:648.0px;width:20px;height:8px;background:#f4f4f4"></div>
<div class="t " style="left:947px;top:644.5px;">approved.png</div>
<div class="t g" style="left:1264px;top:644.5px;">12/3/2025 6:22 PM</div>
<div class="t g" style="left:1475px;top:644.5px;letter-spacing:-0.45px">Pictures\Screenshots</div>
<div class="a" style="left:915px;top:682.0px;width:20px;height:8px;background:#f4f4f4"></div>
<div class="t " style="left:947px;top:678.5px;">Screenshot 2025-12-03 182234.png</div>
<div class="t g" style="left:1264px;top:678.5px;">12/3/2025 6:22 PM</div>
<div class="t g" style="left:1475px;top:678.5px;letter-spacing:-0.45px">Pictures\Screenshots</div>
<div class="a" style="left:915px;top:714.0px;width:20px;height:12px;background:#f4f4f4"></div>
<div class="t " style="left:947px;top:712.5px;">box.png</div>
<div class="t g" style="left:1264px;top:712.5px;">12/3/2025 6:20 PM</div>
<div class="t g" style="left:1475px;top:712.5px;letter-spacing:-0.45px">Pictures\Screenshots</div>
<div class="a" style="left:915px;top:748.0px;width:20px;height:12px;background:#f4f4f4"></div>
<div class="t " style="left:947px;top:746.5px;">Screenshot 2025-12-03 182025.png</div>
<div class="t g" style="left:1264px;top:746.5px;">12/3/2025 6:20 PM</div>
<div class="t g" style="left:1475px;top:746.5px;letter-spacing:-0.45px">Pictures\Screenshots</div>
<div class="a" style="left:915px;top:783.0px;width:20px;height:10px;background:#f4f4f4"></div>
<div class="a" style="left:915px;top:783.0px;width:2px;height:10px;background:#23477a"></div>
<div class="t " style="left:947px;top:780.5px;">updatePro.png</div>
<div class="t g" style="left:1264px;top:780.5px;">12/3/2025 6:18 PM</div>
<div class="t g" style="left:1475px;top:780.5px;letter-spacing:-0.45px">Pictures\Screenshots</div>
<div class="a" style="left:915px;top:817.0px;width:20px;height:10px;background:#f4f4f4"></div>
<div class="a" style="left:915px;top:817.0px;width:2px;height:10px;background:#23477a"></div>
<div class="t " style="left:947px;top:814.5px;">Screenshot 2025-12-03 181827.png</div>
<div class="t g" style="left:1264px;top:814.5px;">12/3/2025 6:18 PM</div>
<div class="t g" style="left:1475px;top:814.5px;letter-spacing:-0.45px">Pictures\Screenshots</div>
<div class="a" style="left:915px;top:852.0px;width:20px;height:8px;background:#f4f4f4"></div>
<div class="t " style="left:947px;top:848.5px;">youth.png</div>
<div class="t g" style="left:1264px;top:848.5px;">12/3/2025 6:12 PM</div>
<div class="t g" style="left:1475px;top:848.5px;letter-spacing:-0.45px">Pictures\Screenshots</div>
<div class="a" style="left:915px;top:886.0px;width:20px;height:8px;background:#f4f4f4"></div>
<div class="t " style="left:947px;top:882.5px;">Screenshot 2025-12-03 181233.png</div>
<div class="t g" style="left:1264px;top:882.5px;">12/3/2025 6:12 PM</div>
<div class="t g" style="left:1475px;top:882.5px;letter-spacing:-0.45px">Pictures\Screenshots</div>
<div class="a" style="left:915px;top:922.5px;width:20px;height:3px;background:#f4f4f4"></div>
<div class="t " style="left:947px;top:916.5px;">adult.png</div>
<div class="t g" style="left:1264px;top:916.5px;">12/3/2025 6:05 PM</div>
<div class="t g" style="left:1475px;top:916.5px;letter-spacing:-0.45px">Pictures\Screenshots</div>
<div class="a" style="left:915px;top:956.5px;width:20px;height:3px;background:#f4f4f4"></div>
<div class="t " style="left:947px;top:950.5px;">Screenshot 2025-12-03 180511.png</div>
<div class="t g" style="left:1264px;top:950.5px;">12/3/2025 6:05 PM</div>
<div class="t g" style="left:1475px;top:950.5px;letter-spacing:-0.45px">Pictures\Screenshots</div>
<div class="a" style="left:915px;top:990.5px;width:20px;height:3px;background:#9a9a9a"></div>
<div class="t " style="left:947px;top:984.5px;">bod.png</div>
<div class="t g" style="left:1264px;top:984.5px;">12/3/2025 6:03 PM</div>
<div class="t g" style="left:1475px;top:984.5px;letter-spacing:-0.45px">Pictures\Screenshots</div>
<div class="t " style="left:683px;top:1005px;color:#d8d8d8">29 items</div>
<div class="a" style="left:737px;top:1006px;width:1px;height:13px;background:#cfcfcf"></div>
<div class="t " style="left:748px;top:1005px;color:#d8d8d8;letter-spacing:-0.5px">1 item selected&nbsp;&nbsp;33.4 KB</div>
<div class="a" style="left:881px;top:1006px;width:1px;height:13px;background:#cfcfcf"></div>

  <div class="a" style="left:668px;top:1px;width:1245px;height:1024px;border:1px solid #353535;border-radius:8px"></div>
</div>
<!-- TASKBAR -->
<div class="a" style="left:0;top:1032px;width:1920px;height:48px;background:#1b1b1b;border-top:1px solid #363636"></div>
<svg style="left:20px;top:1044px" width="22" height="22" viewBox="0 0 22 22"><defs><linearGradient id="gSun" x1="0" y1="0" x2="1" y2="1"><stop offset="0" stop-color="#ffc51a"/><stop offset="1" stop-color="#f07a08"/></linearGradient></defs><circle cx="11" cy="11" r="10" fill="url(#gSun)"/></svg>
<div class="t" style="left:51px;top:1040px;font-size:11.5px;letter-spacing:-0.1px;-webkit-text-stroke:0.25px #fff">73°F</div>
<div class="t" style="left:51px;top:1056px;font-size:12px;letter-spacing:-0.1px;color:#cfcfcf">Sunny</div>
<svg style="left:507px;top:1045px" width="23" height="23" viewBox="0 0 23 23"><defs><linearGradient id="gWin" x1="0" y1="0" x2="1" y2="1"><stop offset="0" stop-color="#7fe6ff"/><stop offset="1" stop-color="#1a9ef0"/></linearGradient></defs><rect x="0" y="0" width="11" height="11" rx="1" fill="url(#gWin)"/><rect x="12" y="0" width="11" height="11" rx="1" fill="url(#gWin)"/><rect x="0" y="12" width="11" height="11" rx="1" fill="url(#gWin)"/><rect x="12" y="12" width="11" height="11" rx="1" fill="url(#gWin)"/></svg>
<div class="a" style="left:543px;top:1040px;width:220px;height:32px;border-radius:16px;background:#303030;border:1px solid #474747"></div>
<svg style="left:555px;top:1049px" width="14" height="15" viewBox="0 0 14 15"><circle cx="6" cy="6" r="5" fill="none" stroke="#e0e0e0" stroke-width="1.5"/><path d="M9.6 9.8 L13 13.5" stroke="#e0e0e0" stroke-width="1.6" stroke-linecap="round"/></svg>
<div class="t" style="left:580px;top:1048px;font-size:13.5px;letter-spacing:-0.35px;color:#d4d4d4">Search</div>
<svg style="left:713px;top:1042px" width="44" height="28" viewBox="0 0 44 28"><defs><radialGradient id="gMoon" cx="0.4" cy="0.35" r="0.7"><stop offset="0" stop-color="#f8dc8a"/><stop offset="1" stop-color="#d9a840"/></radialGradient></defs><circle cx="21" cy="11" r="11" fill="url(#gMoon)"/><circle cx="16" cy="8" r="2" fill="#d4a040"/><circle cx="25" cy="14" r="1.6" fill="#d4a040"/><path d="M0 24 L4 18 L6 21 L8 16 L11 22 L14 23 H30 L33 17 L35 21 L38 15 L41 22 L44 23 L40 26 Q22 29 2 27 Z" fill="#3a56b8"/><path d="M3 26 Q20 21 38 24 Q22 28 3 27 Z" fill="#c8cfe8"/></svg>
<svg style="left:775px;top:1044px" width="25" height="23" viewBox="0 0 25 23"><rect x="6" y="1" width="18" height="16" rx="1.5" fill="#dcdcdc"/><rect x="0" y="7" width="18" height="16" rx="1.5" fill="#7a7a7a" fill-opacity="0.75"/></svg>
<svg style="left:819px;top:1045px" width="23" height="22" viewBox="0 0 23 22"><defs><linearGradient id="gMeet" x1="0" y1="0" x2="1" y2="1"><stop offset="0" stop-color="#8a5cc0"/><stop offset="1" stop-color="#4f6ad6"/></linearGradient></defs><path d="M11.5 0.5 A11 10.5 0 1 1 6 20 L0.5 21.5 L2.5 16.5 A11 10.5 0 0 1 11.5 0.5 Z" fill="url(#gMeet)"/><rect x="5" y="7" width="9" height="8" rx="1.2" fill="#e8e4f4"/><path d="M14 10 L18 7.5 V14.5 L14 12 Z" fill="#e8e4f4"/></svg>
<svg style="left:863px;top:1045px" width="24" height="22" viewBox="0 0 24 22"><path d="M0 1.5 Q0 0 1.5 0 H8 L10 2.3 H22.5 Q24 2.3 24 3.8 V20.5 Q24 22 22.5 22 H1.5 Q0 22 0 20.5 Z" fill="#d9a21c"/><path d="M0 4.5 Q0 3 1.5 3 H8.5 L10 2.3 H22.5 Q24 2.3 24 3.8 V20.5 Q24 22 22.5 22 H1.5 Q0 22 0 20.5 Z" fill="#f0c03a"/><path d="M5 22 V16 Q5 14.5 6.5 14.5 H17.5 Q19 14.5 19 16 V22 Z" fill="#1a78c8"/><rect x="8" y="17" width="8" height="1.2" fill="#5fb4f0"/></svg>
<div class="a" style="left:872px;top:1072px;width:6px;height:3px;border-radius:2px;background:#9a9a9a"></div>
<svg style="left:907px;top:1044px" width="24" height="24" viewBox="0 0 24 24"><defs><linearGradient id="gEdgeT" x1="0" y1="0" x2="1" y2="0.6"><stop offset="0" stop-color="#2a9ee0"/><stop offset="0.5" stop-color="#2fb4b0"/><stop offset="1" stop-color="#4cc84e"/></linearGradient><linearGradient id="gEdgeB" x1="0" y1="0" x2="0.6" y2="1"><stop offset="0" stop-color="#1a8ad8"/><stop offset="1" stop-color="#0a4c98"/></linearGradient></defs><path d="M0.3 12.5 A11.7 11.7 0 0 1 23.7 11.5 Q23.7 15.8 20 16.6 Q16.5 17.3 13.6 15.6 Q15.8 14 15.3 11.5 Q14.3 8.5 10.5 8.4 Q3.5 8.6 0.3 13.5 Z" fill="url(#gEdgeT)"/><path d="M0.3 13.5 Q3.5 8.6 10.5 8.4 Q13.5 8.5 14.8 10.8 Q12.8 9.6 10.8 10.6 Q8.2 12.2 8.8 16 Q10 20.8 15.5 21 Q19.5 21 22.2 18.6 Q19.8 23.8 12 23.8 Q1.5 23.5 0.3 13.5 Z" fill="url(#gEdgeB)"/></svg>
<svg style="left:951px;top:1044px" width="24" height="24" viewBox="0 0 24 24"><defs><linearGradient id="gFf" x1="0.8" y1="0" x2="0.3" y2="1"><stop offset="0" stop-color="#ffd43b"/><stop offset="0.45" stop-color="#ff8a2a"/><stop offset="0.8" stop-color="#f0353a"/><stop offset="1" stop-color="#e31587"/></linearGradient><linearGradient id="gFfG" x1="0.3" y1="0" x2="0.7" y2="1"><stop offset="0" stop-color="#b03ee8"/><stop offset="1" stop-color="#5b50d8"/></linearGradient></defs><path d="M15 0.5 Q20 3 22 7.5 Q23.5 11 23 14 Q22 21 15 23.2 Q8 24.5 3.5 20 Q-0.5 15.5 1.5 9 L2.8 4.2 L4.5 7 L6.2 4 L7.5 6.5 Q10.5 4.8 14 5.5 Q17 2.5 15 0.5 Z" fill="url(#gFf)"/><circle cx="12" cy="12.8" r="4.6" fill="url(#gFfG)"/><path d="M3 9.5 Q6 7.5 10.5 8.5 Q12 9 12.8 8.2 L11.5 10.8 Q9.5 10.5 8 11.5 Q5.5 10.5 3 9.5 Z" fill="#ff9a2e"/><path d="M17 6 Q20 8.5 20 13 Q20 19 13.5 20.8 Q19.5 17 17.5 11 Z" fill="#ffb03a" fill-opacity="0.7"/></svg>
<div class="a" style="left:987px;top:1036px;width:39px;height:39px;border-radius:5px;background:#2b2b2b;border:1px solid #343434"></div>
<svg style="left:994px;top:1043px" width="25" height="25" viewBox="0 0 24 24"><path d="M12 12 L1.6 6 A12 12 0 0 1 22.4 6 Z" fill="#db4437"/><path d="M12 12 L22.4 6 A12 12 0 0 1 12 24 Z" fill="#f4c20d"/><path d="M12 12 L12 24 A12 12 0 0 1 1.6 6 Z" fill="#0f9d58"/><circle cx="12" cy="12" r="5.5" fill="#fff"/><circle cx="12" cy="12" r="4.3" fill="#4285f4"/></svg>
<svg style="left:1008px;top:1038px" width="17" height="17" viewBox="0 0 17 17"><circle cx="8.5" cy="8.5" r="8" fill="#d9d4cf"/><ellipse cx="8.5" cy="7.5" rx="3.5" ry="4.2" fill="#8a5a3c"/><path d="M5 6 Q8.5 1.5 12 6 Q11 3.5 8.5 3.3 Q6 3.5 5 6 Z" fill="#2a1a10"/><path d="M6 10.5 Q8.5 13 11 10.5 V12 Q8.5 13.5 6 12 Z" fill="#2a1a10"/><path d="M2.5 15 Q8.5 10.5 14.5 15 Q8.5 18 2.5 15 Z" fill="#9fb8d0"/></svg>
<div class="a" style="left:999px;top:1072px;width:16px;height:3px;border-radius:2px;background:#4cc2ff"></div>
<svg style="left:1039px;top:1043px" width="25" height="25" viewBox="0 0 24 24"><path d="M12 12 L1.6 6 A12 12 0 0 1 22.4 6 Z" fill="#db4437"/><path d="M12 12 L22.4 6 A12 12 0 0 1 12 24 Z" fill="#f4c20d"/><path d="M12 12 L12 24 A12 12 0 0 1 1.6 6 Z" fill="#0f9d58"/><circle cx="12" cy="12" r="5.5" fill="#fff"/><circle cx="12" cy="12" r="4.3" fill="#4285f4"/></svg>
<svg style="left:1051px;top:1041px" width="14" height="14" viewBox="0 0 14 14"><circle cx="7" cy="7" r="6.8" fill="#2a2a2a"/><rect x="3" y="3" width="8" height="8" rx="1" fill="#555"/><rect x="4.5" y="4.5" width="5" height="5" fill="#333"/></svg>
<svg style="left:1083px;top:1043px" width="25" height="25" viewBox="0 0 24 24"><path d="M12 12 L1.6 6 A12 12 0 0 1 22.4 6 Z" fill="#db4437"/><path d="M12 12 L22.4 6 A12 12 0 0 1 12 24 Z" fill="#f4c20d"/><path d="M12 12 L12 24 A12 12 0 0 1 1.6 6 Z" fill="#0f9d58"/><circle cx="12" cy="12" r="5.5" fill="#fff"/><circle cx="12" cy="12" r="4.3" fill="#4285f4"/></svg>
<svg style="left:1096px;top:1039px" width="16" height="16" viewBox="0 0 16 16"><circle cx="8" cy="8" r="8" fill="#b8185a"/><text x="8" y="12" text-anchor="middle" font-family="Liberation Sans" font-size="11" fill="#fff">S</text></svg>
<div class="a" style="left:1092px;top:1072px;width:6px;height:3px;border-radius:2px;background:#9a9a9a"></div>
<svg style="left:1127px;top:1047px" width="24" height="18" viewBox="0 0 24 18"><rect x="0" y="0" width="24" height="18" fill="#c8ccd0"/><rect x="1.5" y="1.5" width="21" height="15" fill="#e4eef6"/><path d="M1.5 14 L4 12 L6 13 L7 4 L9 9 L11 8 L13 12 L15 11 L16 3 L18 10 L20 13 L22.5 12 V16.5 H1.5 Z" fill="#6ab8e8"/><path d="M1.5 14 L4 12 L6 13 L7 4 L9 9 L11 8 L13 12 L15 11 L16 3 L18 10 L20 13 L22.5 12" fill="none" stroke="#2a8ad0" stroke-width="0.8"/></svg>
<svg style="left:1171px;top:1046px" width="23" height="19" viewBox="0 0 23 19"><rect x="0" y="0" width="23" height="19" fill="#8a8a8a"/><rect x="0.8" y="2" width="21.4" height="16.2" fill="#080808"/><text x="2.5" y="8.5" font-family="Liberation Mono" font-size="6" fill="#ddd">C:\</text><rect x="12" y="7.5" width="8" height="1" fill="#ddd"/></svg>
<svg style="left:1215px;top:1044px" width="24" height="25" viewBox="0 0 24 25"><path d="M6 1 Q1 1 1 7 Q1 13 4 16 Q6 18 7 15 L8 12 Q8 20 10 23 Q12 25 13 22 L13 17 Q15 18 17 17 Q20 15 19 12 Q23 9 23 5 Q22 0.5 17 1 Q14 0 12 1.5 Q9 0 6 1 Z" fill="#336791" stroke="#e8eef4" stroke-width="1"/><path d="M12 2 Q10 7 11 12 M17 2 Q19 6 17 11" fill="none" stroke="#e8eef4" stroke-width="0.8"/></svg>
<svg style="left:1259px;top:1044px" width="24" height="24" viewBox="0 0 24 24"><path d="M17.5 0.5 L23.5 3.3 V20.7 L17.5 23.5 L7 13.8 L2.8 17 L0.5 15.8 V8.2 L2.8 7 L7 10.2 Z" fill="#1f8ad6"/><path d="M17.5 0.5 L7 10.2 L2.8 7 L0.5 8.2 L4.5 12 L0.5 15.8 L2.8 17 L7 13.8 L17.5 23.5 Z M17.5 6.5 V17.5 L10.5 12 Z" fill="#0065a9"/><path d="M17.5 0.5 L23.5 3.3 V20.7 L17.5 23.5 Z" fill="#2aa4f0"/></svg>
<div class="a" style="left:1268px;top:1072px;width:6px;height:3px;border-radius:2px;background:#9a9a9a"></div>
<svg style="left:1303px;top:1044px" width="24" height="24" viewBox="0 0 24 24"><defs><linearGradient id="gPy" x1="0" y1="0" x2="1" y2="1"><stop offset="0" stop-color="#21d789"/><stop offset="0.5" stop-color="#07c3f2"/><stop offset="1" stop-color="#fcf84a"/></linearGradient></defs><path d="M0 1 Q0 0 1 0 H18 L22 4 V18 L24 22 Q24 24 22 24 H2 Q0 24 0 22 Z" fill="url(#gPy)"/><rect x="4.5" y="4.5" width="15" height="15" fill="#000"/><text x="6" y="12.5" font-family="Liberation Sans" font-weight="bold" font-size="7" fill="#fff">PC</text><rect x="6" y="16" width="5" height="1.2" fill="#fff"/></svg>
<svg style="left:1347px;top:1044px" width="24" height="24" viewBox="0 0 24 24"><path d="M12 0.5 L17.5 6 L12 11.5 L6.5 6 Z" fill="#e06a60"/><path d="M18 6.5 L23.5 12 L18 17.5 L12.5 12 Z" fill="#5ab04a"/><path d="M12 12.5 L17.5 18 L12 23.5 L6.5 18 Z" fill="#f0cc50"/><path d="M6 6.5 L11.5 12 L6 17.5 L0.5 12 Z" fill="#6a9ee8"/><path d="M10 4 L12 12 L12 19 M12 12 L18 12" fill="none" stroke="#111" stroke-width="1.2"/><circle cx="12" cy="19" r="1.4" fill="#111"/><circle cx="18" cy="12" r="1.4" fill="#111"/></svg>
<svg style="left:1391px;top:1044px" width="24" height="24" viewBox="0 0 24 24"><rect x="0" y="0" width="24" height="24" fill="#e6e6e6"/><rect x="5" y="3.5" width="14" height="9" rx="1.2" fill="none" stroke="#1f6da3" stroke-width="1.2"/><rect x="7" y="6" width="4" height="4" fill="#2aa84a"/><rect x="12" y="6" width="4" height="4" fill="#4a9ad0"/><path d="M10 12.5 H14 L14.5 14.5 H9.5 Z" fill="#1f6da3"/><text x="12" y="20" text-anchor="middle" font-family="Liberation Sans" font-size="4.5" fill="#666">TaskPro</text></svg>
<div class="a" style="left:1400px;top:1072px;width:6px;height:3px;border-radius:2px;background:#9a9a9a"></div>
<svg style="left:1671px;top:1052px" width="12" height="7" viewBox="0 0 12 7"><path d="M0.8 6.2 L6 1 L11.2 6.2" fill="none" stroke="#e0e0e0" stroke-width="1.3"/></svg>
<svg style="left:1701px;top:1050px" width="17" height="11" viewBox="0 0 17 11"><path d="M4 10.5 Q0.5 10.5 0.5 7.5 Q0.5 5 3.4 4.6 Q4.5 0.8 8.6 0.8 Q12 0.8 13.3 3.9 Q16.5 4.2 16.5 7.3 Q16.5 10.5 13 10.5 Z" fill="#bdbdbd"/><path d="M3 10.5 Q6 6 10 8 Q13 5 16.5 8 Q16 10.5 13 10.5 Z" fill="#8a8a8a"/></svg>
<svg style="left:1733px;top:1050px" width="17" height="12" viewBox="0 0 17 12"><rect x="0.6" y="0.6" width="15.8" height="10.8" rx="1.5" fill="none" stroke="#e0e0e0" stroke-width="1.1"/><g fill="#e0e0e0"><rect x="3" y="3" width="1.5" height="1.5"/><rect x="6" y="3" width="1.5" height="1.5"/><rect x="9" y="3" width="1.5" height="1.5"/><rect x="12" y="3" width="1.5" height="1.5"/><rect x="4.5" y="5.5" width="1.5" height="1.5"/><rect x="7.5" y="5.5" width="1.5" height="1.5"/><rect x="10.5" y="5.5" width="1.5" height="1.5"/><rect x="5" y="8" width="7" height="1.3"/></g></svg>
<svg style="left:1765px;top:1049px" width="17" height="13" viewBox="0 0 17 13"><path d="M0.8 5 Q8.5 -2 16.2 5 M3.3 7.5 Q8.5 2.5 13.7 7.5 M5.8 10 Q8.5 7.5 11.2 10" fill="none" stroke="#e8e8e8" stroke-width="1.3" stroke-linecap="round"/><circle cx="8.5" cy="11.8" r="1.3" fill="#e8e8e8"/></svg>
<svg style="left:1789px;top:1048px" width="17" height="15" viewBox="0 0 17 15"><path d="M0.8 5 H3.5 L7.5 1 V14 L3.5 10 H0.8 Z" fill="none" stroke="#e0e0e0" stroke-width="1.1" stroke-linejoin="round"/><path d="M10 5 Q11.3 7.5 10 10 M12.3 3 Q14.5 7.5 12.3 12 M14.6 1 Q17.5 7.5 14.6 14" fill="none" stroke="#e0e0e0" stroke-width="1.1" stroke-linecap="round"/></svg>
<div class="t" style="left:1800px;top:1040px;width:76px;text-align:right;font-size:12px;letter-spacing:-0.1px;color:#f0f0f0">12:01 PM</div>
<div class="t" style="left:1800px;top:1056px;width:76px;text-align:right;font-size:12px;letter-spacing:-0.1px;color:#f0f0f0">12/4/2025</div>
<svg style="left:1885px;top:1048px" width="14" height="16" viewBox="0 0 14 16"><path d="M7 0.5 Q11.5 0.5 11.8 5.5 V9.5 L13.5 12.5 H0.5 L2.2 9.5 V5.5 Q2.5 0.5 7 0.5 Z" fill="#76c6de"/><path d="M4.8 13.5 Q7 16.5 9.2 13.5 Z" fill="#76c6de"/></svg>

</body></html>
